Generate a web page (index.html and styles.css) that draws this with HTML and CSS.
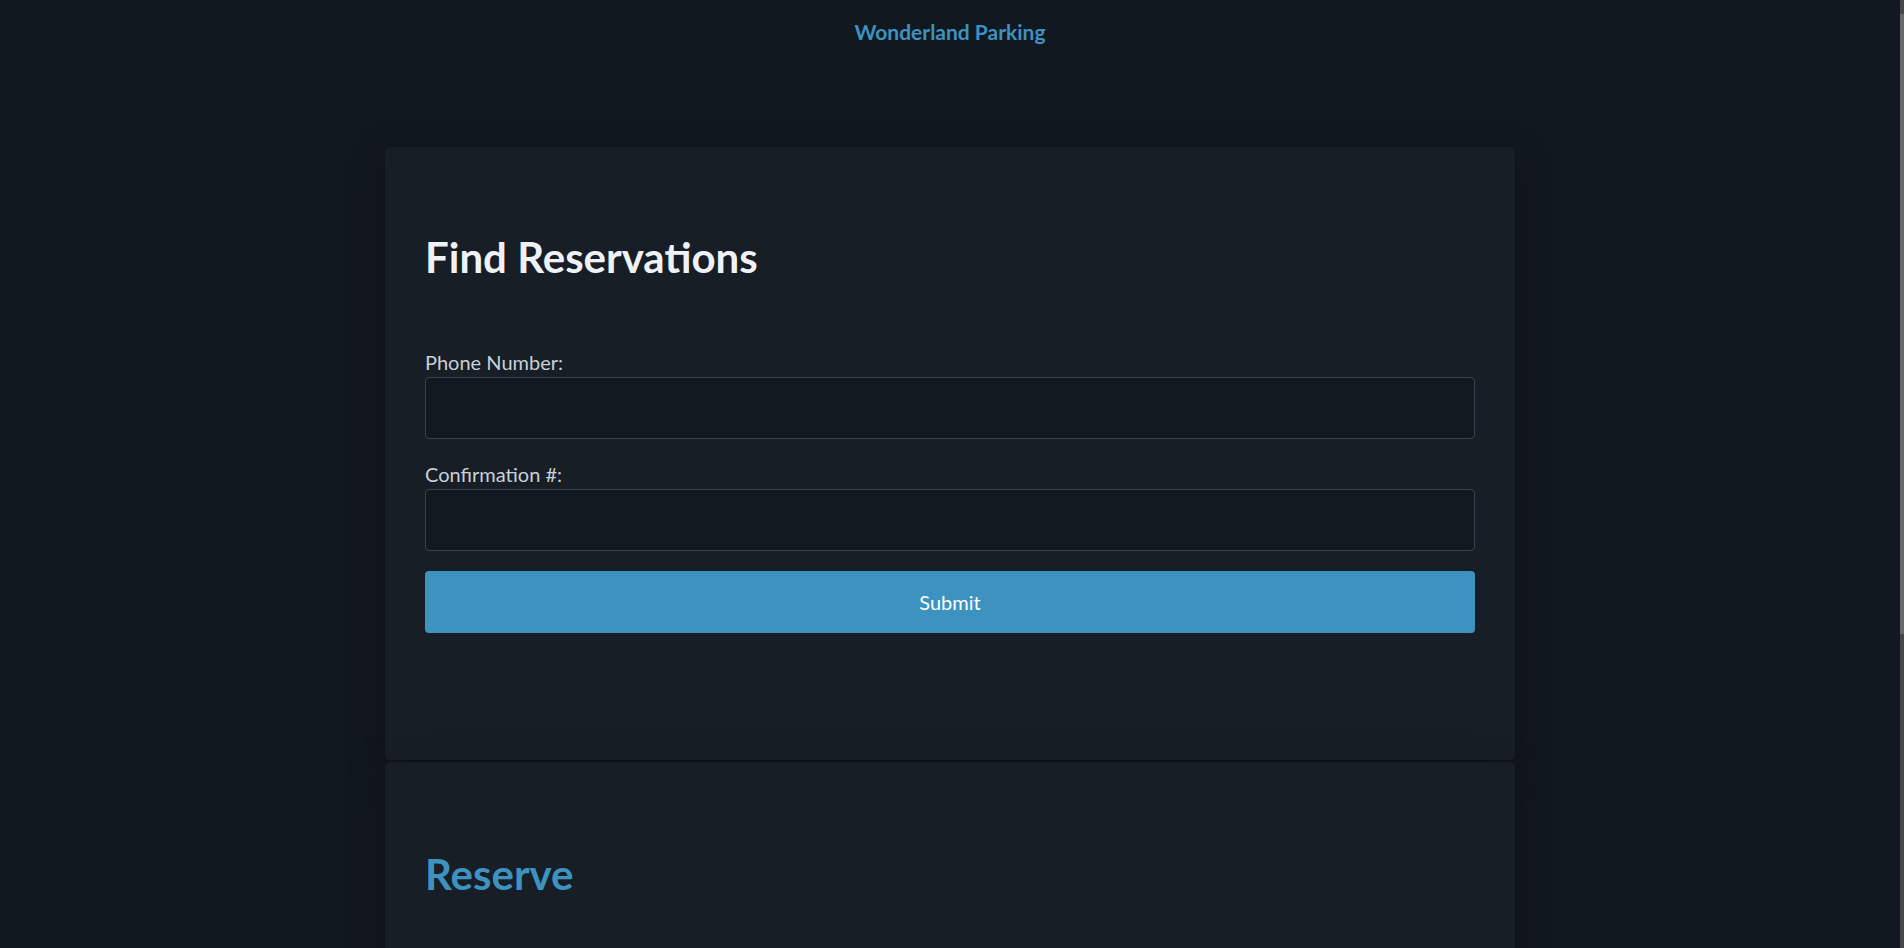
FILE: index.html
```html
<!DOCTYPE html>
<html lang="en">
<head>
<meta charset="utf-8">
<title>Wonderland Parking</title>
<link rel="stylesheet" href="styles.css">
</head>
<body>
<header class="topbar">
  <div class="brand">Wonderland Parking</div>
</header>
<main class="container">
  <section class="card">
    <h1 class="card-title">Find Reservations</h1>
    <form class="form">
      <div class="field">
        <label class="label" for="phone">Phone Number:</label>
        <input class="input" id="phone" type="text">
      </div>
      <div class="field">
        <label class="label" for="conf">Confirmation #:</label>
        <input class="input" id="conf" type="text">
      </div>
      <button class="button" type="button">Submit</button>
    </form>
  </section>
  <section class="card card-tall">
    <h2 class="card-title accent">Reserve</h2>
  </section>
</main>
<div class="scrollbar" aria-hidden="true"><div class="scrollbar-thumb"></div></div>
</body>
</html>
```
FILE: styles.css
```css
html {
  background: #12181f;
}
body {
  margin: 0 4px 0 0;
  background: #12181f;
  font-family: Lato, "Noto Sans", sans-serif;
  color: #c7d0d9;
}
.topbar {
  padding-top: 20px;
  display: flex;
  justify-content: center;
}
.brand {
  font-size: 21px;
  line-height: 24px;
  font-weight: 700;
  color: #3d92c0;
}
.container {
  margin-top: 103px;
  display: flex;
  flex-direction: column;
  align-items: center;
  gap: 2px;
  padding-bottom: 60px;
}
.card {
  box-sizing: border-box;
  width: 1130px;
  background: #181e26;
  border-radius: 5px;
  box-shadow: 0 10px 40px rgba(0, 0, 0, 0.28);
  padding: 40px 40px 127px;
}
.card-tall {
  min-height: 500px;
}
.card-title {
  margin: 45px 0 69px;
  font-size: 42px;
  line-height: 50px;
  font-weight: 700;
  color: #eef2f6;
}
.card-title.accent {
  margin-top: 47px;
  color: #3d92c0;
}
.form {
  display: flex;
  flex-direction: column;
}
.field {
  display: flex;
  flex-direction: column;
  margin-bottom: 24px;
}
.field:last-of-type {
  margin-bottom: 20px;
}
.label {
  font-size: 20px;
  line-height: 23px;
  margin-bottom: 3px;
  color: #c7d0d9;
}
.input {
  box-sizing: border-box;
  height: 62px;
  background: #131920;
  border: 1px solid #37414d;
  border-radius: 4px;
  color: #eef2f6;
  font: inherit;
  padding: 0 14px;
}
.button {
  height: 62px;
  border: none;
  border-radius: 4px;
  background: #3d92c0;
  color: #ffffff;
  font-family: inherit;
  font-size: 20px;
  cursor: pointer;
}
.scrollbar {
  position: fixed;
  top: 0;
  right: 0;
  bottom: 0;
  width: 4px;
  background: #474747;
}
.scrollbar-thumb {
  margin-top: 14px;
  height: 620px;
  background: #686868;
}
```
